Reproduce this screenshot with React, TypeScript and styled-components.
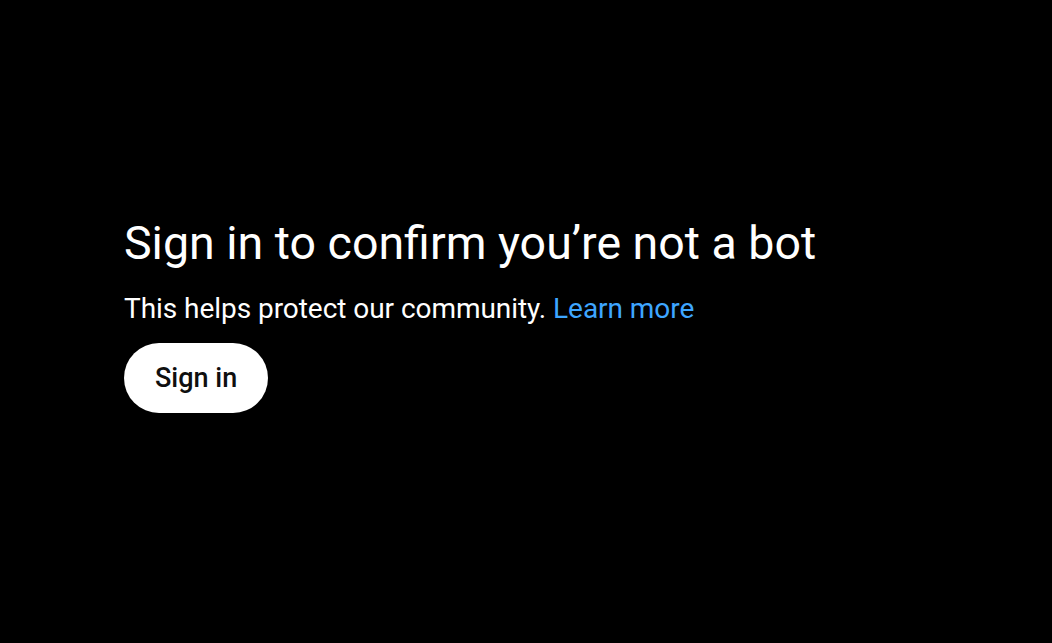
import React from "react";
import styled, { createGlobalStyle } from "styled-components";

const GlobalStyled = createGlobalStyle`
  *, *::after, *::before {
    box-sizing: border-box;
  }

  html, body {
    margin: 0;
    padding: 0;
    background-color: #000;
    font-family: Roboto, "Liberation Sans", sans-serif;
  }
`;

const Wrapper = styled.div`
  width: 100vw;
  height: 100vh;
  display: flex;
  flex-direction: column;
  justify-content: center;
  padding: 0 0 17px 124px;
`;

const Title = styled.h1`
  margin: 0;
  font-size: 46.5px;
  font-weight: 400;
  line-height: 60px;
  color: #fff;
`;

const Description = styled.p`
  margin: 18px 0 0;
  font-size: 28px;
  letter-spacing: -0.05px;
  line-height: 36px;
  color: #fff;
`;

const Link = styled.a`
  color: #3ea6ff;
  text-decoration: none;
`;

const Button = styled.button`
  align-self: flex-start;
  margin-top: 16px;
  height: 70px;
  padding: 0 31px;
  border: none;
  border-radius: 35px;
  background: #fff;
  color: #0f0f0f;
  font-family: Roboto, "Liberation Sans", sans-serif;
  font-size: 27px;
  font-weight: 500;
  cursor: pointer;
`;

const App: React.FC = () => {
  return (
    <>
      <GlobalStyled />
      <Wrapper>
        <Title>Sign in to confirm you’re not a bot</Title>
        <Description>
          This helps protect our community. <Link href="#">Learn more</Link>
        </Description>
        <Button>Sign in</Button>
      </Wrapper>
    </>
  );
};

export default App;
